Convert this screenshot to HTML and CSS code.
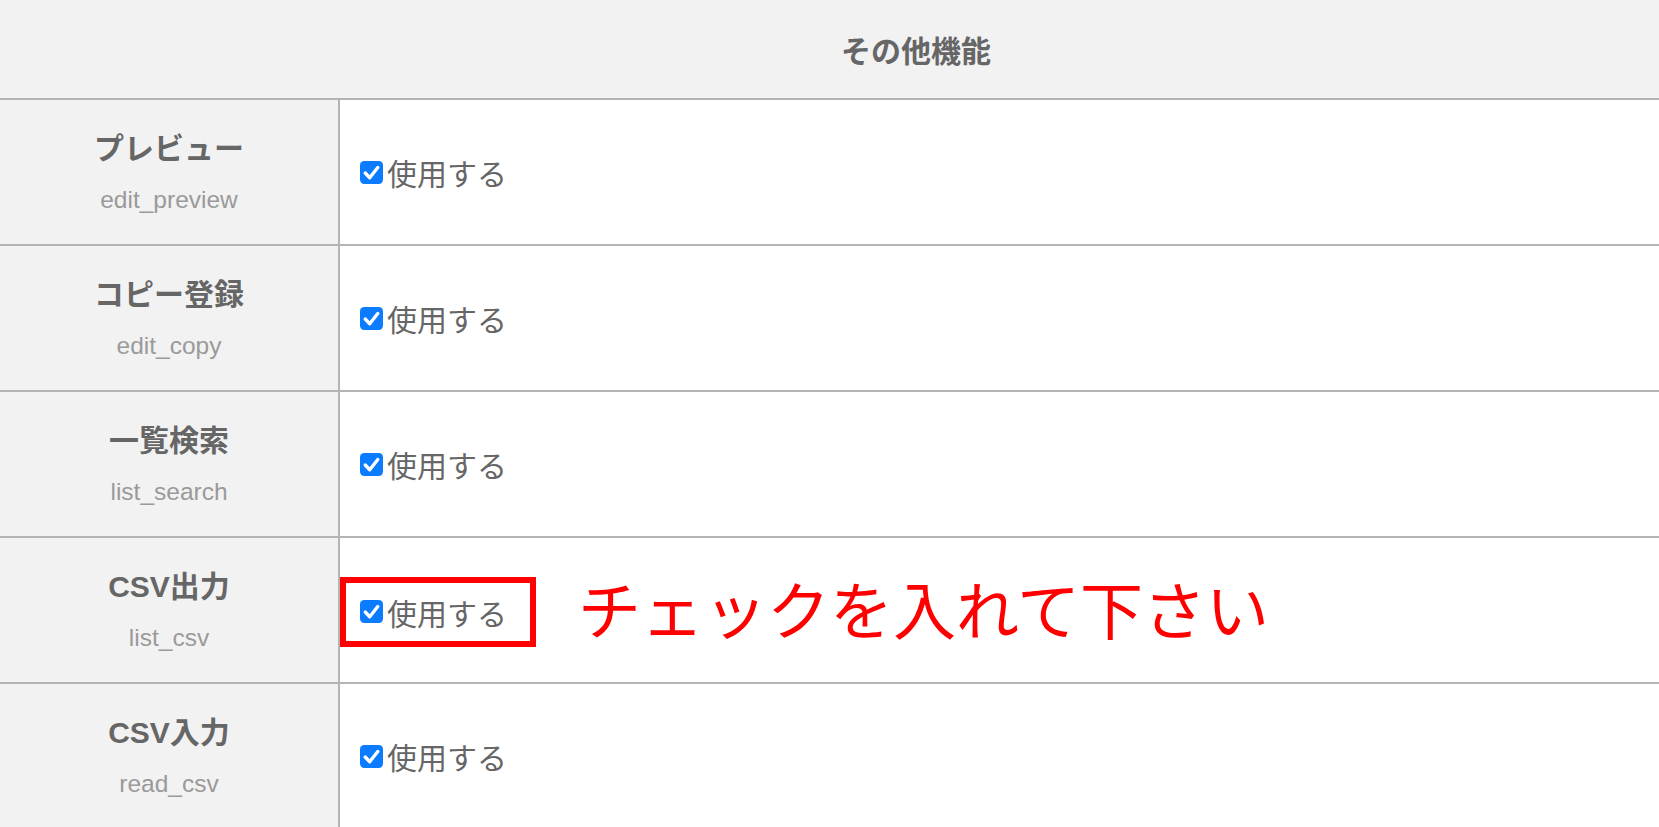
FILE: index.html
```html
<!DOCTYPE html>
<html lang="ja">
<head>
<meta charset="utf-8">
<title>その他機能</title>
<link rel="stylesheet" href="styles.css">
</head>
<body>
<div class="table">
  <div class="head">その他機能</div>

  <div class="row">
    <div class="label"><div class="title">プレビュー</div><div class="sub">edit_preview</div></div>
    <div class="value"><span class="check"><svg viewBox="0 0 22 22" width="23" height="23"><rect x="0" y="0" width="22" height="22" rx="4" fill="#0b7cff"/><path d="M5 11.5 L9.3 16 L17 6.2" fill="none" stroke="#fff" stroke-width="3.2" stroke-linecap="round" stroke-linejoin="round"/></svg></span><span class="use">使用する</span></div>
  </div>

  <div class="row">
    <div class="label"><div class="title">コピー登録</div><div class="sub">edit_copy</div></div>
    <div class="value"><span class="check"><svg viewBox="0 0 22 22" width="23" height="23"><rect x="0" y="0" width="22" height="22" rx="4" fill="#0b7cff"/><path d="M5 11.5 L9.3 16 L17 6.2" fill="none" stroke="#fff" stroke-width="3.2" stroke-linecap="round" stroke-linejoin="round"/></svg></span><span class="use">使用する</span></div>
  </div>

  <div class="row">
    <div class="label"><div class="title">一覧検索</div><div class="sub">list_search</div></div>
    <div class="value"><span class="check"><svg viewBox="0 0 22 22" width="23" height="23"><rect x="0" y="0" width="22" height="22" rx="4" fill="#0b7cff"/><path d="M5 11.5 L9.3 16 L17 6.2" fill="none" stroke="#fff" stroke-width="3.2" stroke-linecap="round" stroke-linejoin="round"/></svg></span><span class="use">使用する</span></div>
  </div>

  <div class="row">
    <div class="label"><div class="title">CSV出力</div><div class="sub">list_csv</div></div>
    <div class="value value-marked">
      <div class="mark"><span class="check"><svg viewBox="0 0 22 22" width="23" height="23"><rect x="0" y="0" width="22" height="22" rx="4" fill="#0b7cff"/><path d="M5 11.5 L9.3 16 L17 6.2" fill="none" stroke="#fff" stroke-width="3.2" stroke-linecap="round" stroke-linejoin="round"/></svg></span><span class="use">使用する</span></div>
      <div class="note">チェックを入れて下さい</div>
    </div>
  </div>

  <div class="row">
    <div class="label"><div class="title">CSV入力</div><div class="sub">read_csv</div></div>
    <div class="value"><span class="check"><svg viewBox="0 0 22 22" width="23" height="23"><rect x="0" y="0" width="22" height="22" rx="4" fill="#0b7cff"/><path d="M5 11.5 L9.3 16 L17 6.2" fill="none" stroke="#fff" stroke-width="3.2" stroke-linecap="round" stroke-linejoin="round"/></svg></span><span class="use">使用する</span></div>
  </div>
</div>
</body>
</html>
```

FILE: styles.css
```css
html, body {
  margin: 0;
  padding: 0;
  background: #ffffff;
  overflow: hidden;
}
body {
  font-family: "Liberation Sans", "Noto Sans CJK JP", Arial, sans-serif;
  color: #666666;
}
.table {
  width: 1832px;
}
.head {
  height: 98px;
  background: #f2f2f2;
  border-bottom: 2px solid #b4b4b4;
  display: flex;
  align-items: center;
  justify-content: center;
  font-family: "Noto Sans CJK JP", sans-serif;
  font-weight: 700;
  font-size: 30px;
  color: #666666;
}
.row {
  display: grid;
  grid-template-columns: 340px 1fr;
  height: 144px;
  border-bottom: 2px solid #b4b4b4;
}
.label {
  background: #f2f2f2;
  border-right: 2px solid #b4b4b4;
  display: flex;
  flex-direction: column;
  align-items: center;
  justify-content: center;
  gap: 16px;
}
.title {
  font-family: "Liberation Sans", "Noto Sans CJK JP", sans-serif;
  font-weight: 700;
  font-size: 30px;
  line-height: 40px;
  color: #666666;
}
.sub {
  font-family: "Liberation Sans", Arial, sans-serif;
  font-size: 24.5px;
  line-height: 30px;
  color: #9a9a9a;
}
.value {
  display: flex;
  align-items: center;
  padding-left: 20px;
}
.check {
  display: inline-flex;
  width: 23px;
  height: 23px;
  margin-right: 4px;
}
.check svg {
  display: block;
}
.use {
  font-family: "Noto Sans CJK JP", sans-serif;
  font-size: 30px;
  line-height: 40px;
  color: #666666;
}
.value-marked {
  padding-left: 0;
  gap: 42px;
}
.mark {
  display: flex;
  align-items: center;
  border: 6px solid #ff0000;
  height: 58px;
  padding: 0 23px 0 14px;
  margin-top: 3px;
}
.note {
  font-family: "Noto Sans CJK JP", sans-serif;
  font-size: 63px;
  line-height: 70px;
  font-weight: 400;
  color: #ff0000;
  margin-top: -6px;
}
```
